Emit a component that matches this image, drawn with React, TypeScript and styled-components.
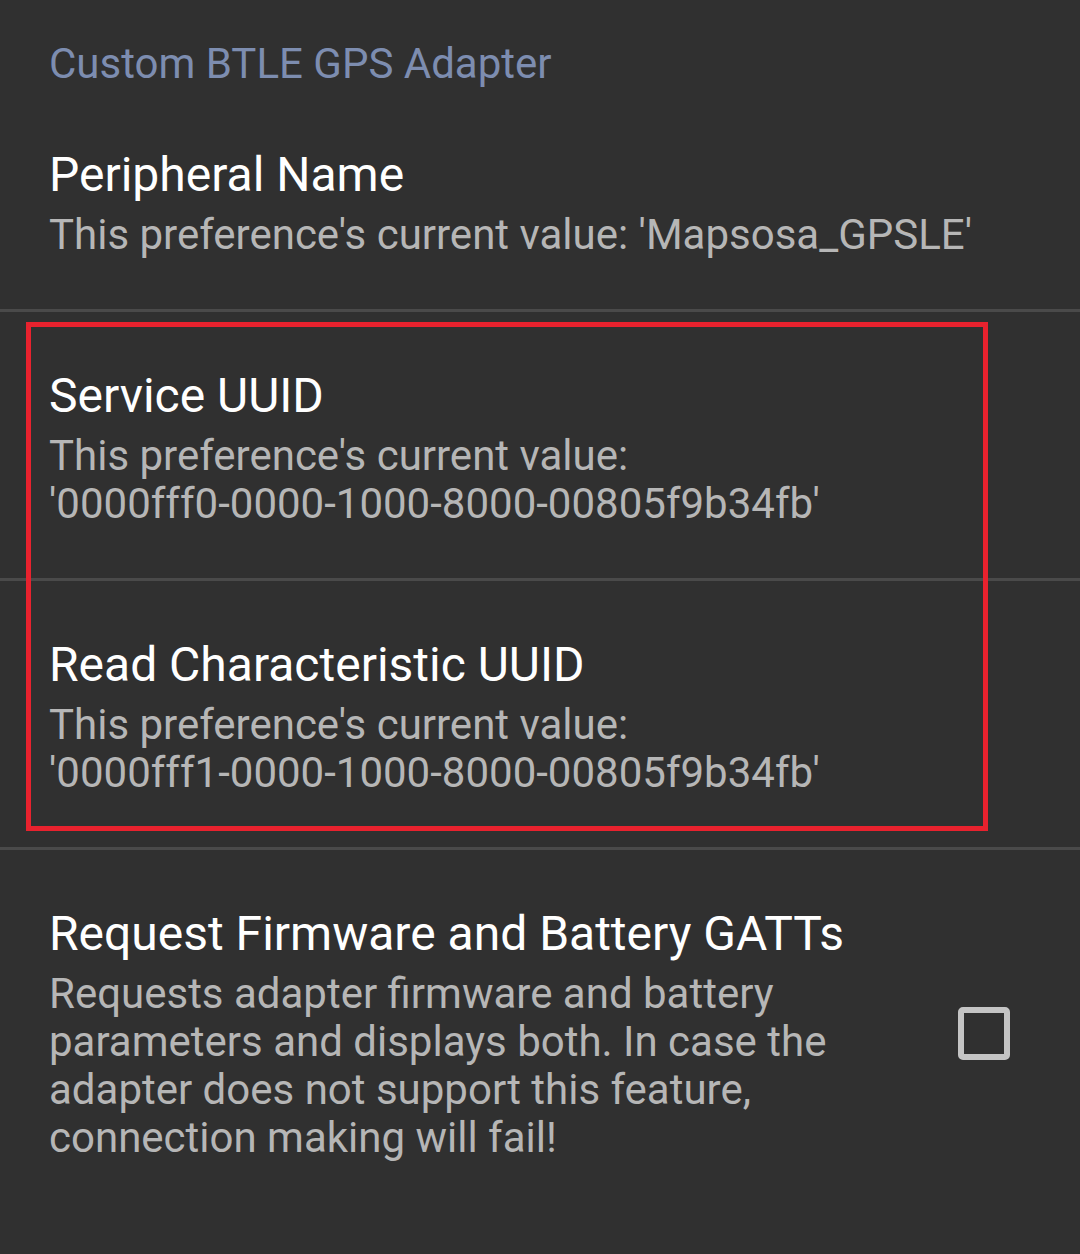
import { ReactElement, ReactNode } from 'react';
import styled, { createGlobalStyle } from 'styled-components';

const GlobalStyle = createGlobalStyle`
  html, body {
    margin: 0;
    padding: 0;
    background: #303030;
  }

  body {
    font-family: Roboto, "Noto Sans", sans-serif;
    -webkit-font-smoothing: antialiased;
  }
`;

const Screen = styled.div`
  width: 1080px;
  min-height: 1254px;
  background: #303030;
  overflow: hidden;
`;

const CategoryTitle = styled.div`
  padding: 39px 49px 2px;
  font-size: 42px;
  line-height: 50px;
  color: #7d8db0;
`;

const Row = styled.div<{ $divider?: boolean }>`
  display: flex;
  align-items: center;
  padding: 54px 0 50px 49px;
  border-bottom: ${(p) => (p.$divider ? '3px solid #4a4a4a' : 'none')};
`;

const Texts = styled.div<{ $withWidget?: boolean }>`
  flex: 1;
  min-width: 0;
  padding-right: ${(p) => (p.$withWidget ? '0' : '40px')};
`;

const Title = styled.div`
  font-size: 48px;
  line-height: 60px;
  color: #ffffff;
`;

const Summary = styled.div`
  margin-top: 6px;
  font-size: 42px;
  line-height: 48px;
  color: #b6b6b6;
`;

const Value = styled.span`
  white-space: nowrap;
`;

const Widget = styled.div`
  display: flex;
  align-items: center;
  justify-content: center;
  width: 52px;
  margin: 0 70px 0 29px;
`;

const CheckBox = styled.span`
  box-sizing: border-box;
  width: 52px;
  height: 53px;
  border: 6px solid #c4c4c4;
  border-radius: 5px;
`;

// red annotation frame drawn over the two UUID rows
const Highlight = styled.div`
  position: relative;

  &::after {
    content: '';
    position: absolute;
    top: 10px;
    left: 26px;
    right: 92px;
    bottom: 19px;
    border: 5px solid #e8222e;
    pointer-events: none;
  }
`;

interface PreferenceProps {
  title: string;
  summary: ReactNode;
  divider?: boolean;
  checkbox?: boolean;
}

function Preference(props: PreferenceProps): ReactElement {
  return (
    <Row $divider={props.divider}>
      <Texts $withWidget={props.checkbox}>
        <Title>{props.title}</Title>
        <Summary>{props.summary}</Summary>
      </Texts>
      {props.checkbox && (
        <Widget>
          <CheckBox />
        </Widget>
      )}
    </Row>
  );
}

function currentValue(value: string): ReactNode {
  return (
    <>
      This preference's current value: <Value>'{value}'</Value>
    </>
  );
}

export default function App(): ReactElement {
  return (
    <Screen>
      <GlobalStyle />
      <CategoryTitle>Custom BTLE GPS Adapter</CategoryTitle>
      <Preference
        divider
        title="Peripheral Name"
        summary={currentValue('Mapsosa_GPSLE')}
      />
      <Highlight>
        <Preference
          divider
          title="Service UUID"
          summary={currentValue('0000fff0-0000-1000-8000-00805f9b34fb')}
        />
        <Preference
          divider
          title="Read Characteristic UUID"
          summary={currentValue('0000fff1-0000-1000-8000-00805f9b34fb')}
        />
      </Highlight>
      <Preference
        checkbox
        title="Request Firmware and Battery GATTs"
        summary="Requests adapter firmware and battery parameters and displays both. In case the adapter does not support this feature, connection making will fail!"
      />
    </Screen>
  );
}
